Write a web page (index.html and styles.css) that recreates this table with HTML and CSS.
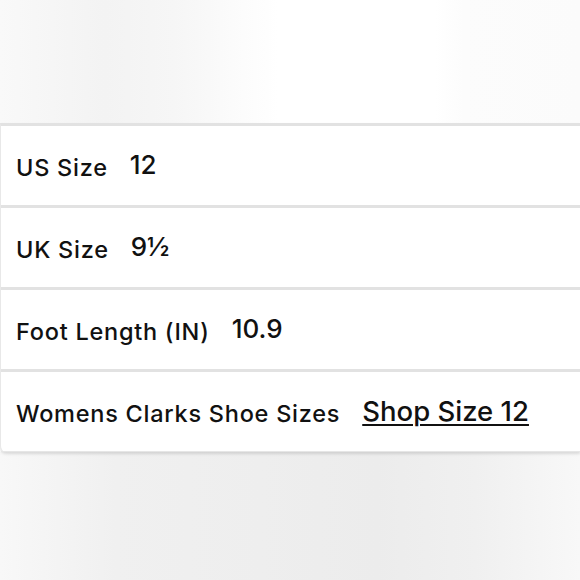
FILE: index.html
```html
<!DOCTYPE html>
<html>
<head>
<meta charset="utf-8">
<link rel="stylesheet" href="styles.css">
</head>
<body>
<div class="hero-top"></div>
<div class="card">
  <div class="row"><span class="label">US Size</span><span class="value">12</span></div>
  <div class="row"><span class="label">UK Size</span><span class="value">9½</span></div>
  <div class="row"><span class="label">Foot Length (IN)</span><span class="value">10.9</span></div>
  <div class="row last"><span class="label">Womens Clarks Shoe Sizes</span><a class="link" href="#">Shop Size 12</a></div>
</div>
<div class="hero-bottom"></div>
</body>
</html>
```
FILE: styles.css
```css
html, body {
  margin: 0;
  padding: 0;
  background: #ffffff;
  width: 580px;
  height: 580px;
  overflow: hidden;
  font-family: "Inter", "DejaVu Sans", sans-serif;
  color: #111;
}
.hero-top {
  height: 123px;
  background: linear-gradient(90deg, #f9f9f9 0%, #f3f3f3 18%, #f6f6f6 30%, #ffffff 48%, #ffffff 75%, #fcfcfc 80%, #fbfbfb 100%);
}
.card {
  background: #fff;
  border-top: 3px solid #e2e2e2;
  border-left: 1px solid #e8e8e8;
  border-radius: 0 0 0 6px;
  box-shadow: 0 2px 3px rgba(0, 0, 0, 0.12);
  position: relative;
  z-index: 1;
}
.row {
  height: 79px;
  border-bottom: 3px solid #e2e2e2;
  display: flex;
  align-items: center;
  gap: 22px;
  padding: 0 0 0 15px;
  box-sizing: content-box;
}
.row.last {
  border-bottom: 1px solid #e6e6e6;
  height: 79px;
}
.label {
  font-size: 23.5px;
  font-weight: 500;
  letter-spacing: 0.75px;
  padding-top: 4px;
}
.value {
  font-size: 26px;
  font-weight: 500;
  padding-bottom: 2px;
}
.link {
  font-size: 27.5px;
  font-weight: 500;
  color: #111;
  text-decoration: underline;
  text-decoration-thickness: 2px;
  text-underline-offset: 3px;
  padding-bottom: 2px;
}
.hero-bottom {
  height: 130px;
  background: linear-gradient(90deg, #f8f8f8 0%, #f0f0f0 20%, #eeeeee 45%, #ececec 65%, #f0f0f0 82%, #f8f8f8 100%);
}
```
